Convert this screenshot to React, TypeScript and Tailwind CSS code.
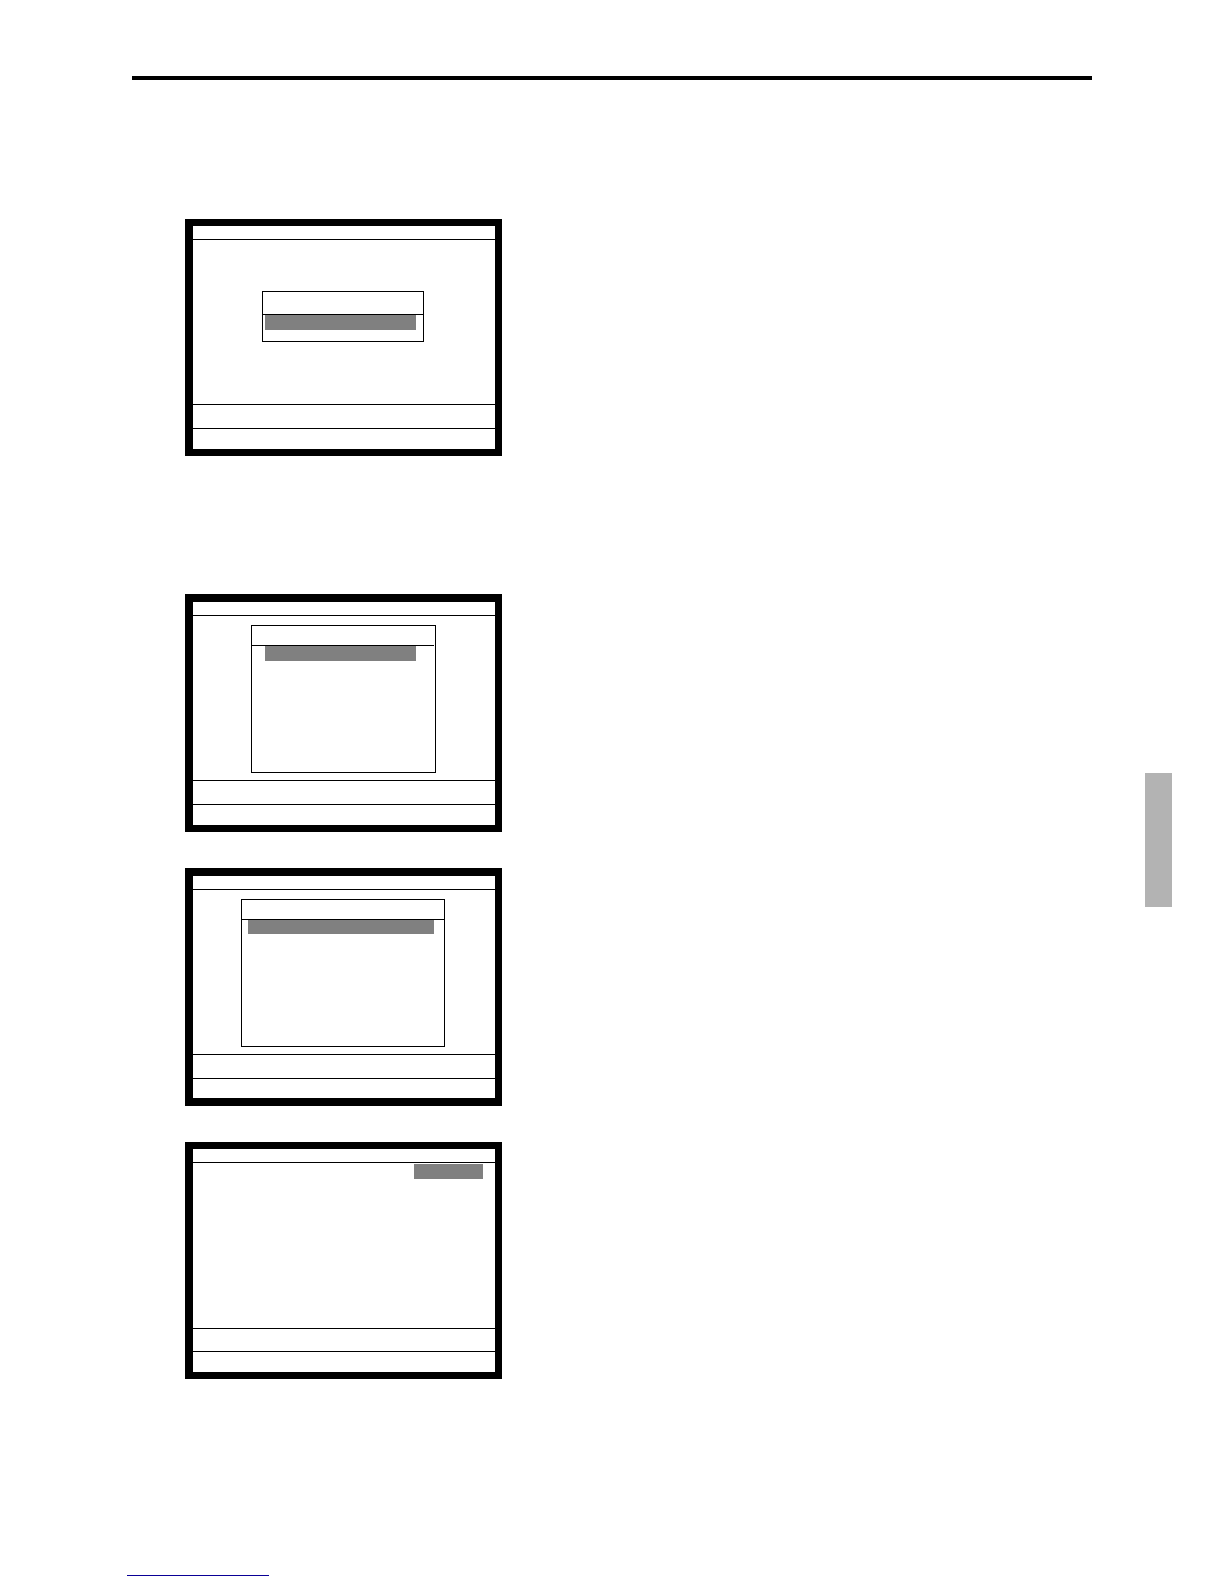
import type { ReactNode } from 'react';
import clsx from 'clsx';

interface ScreenProps {
    frame: string;
    body?: string;
    message?: string;
    status?: string;
    children: ReactNode;
}

// Terminal screen: title strip, work area, message line and status line
function Screen({
    frame,
    body = 'h-[164px]',
    message = 'h-6',
    status = 'h-[21px]',
    children,
}: ScreenProps) {
    return (
        <section className={clsx('w-[317px] max-w-full border-black border-l-8 border-r-[7px]', frame)}>
            <div className="h-3.5 border-b border-black" />
            <div className={clsx('flex flex-col', body)}>{children}</div>
            <div className={clsx('border-t border-black', message)} />
            <div className={clsx('border-t border-black', status)} />
        </section>
    );
}

interface MenuProps {
    box: string;
    title: string;
    selected: string;
}

// Menu window with the first entry highlighted
function Menu({ box, title, selected }: MenuProps) {
    return (
        <div className={clsx('border border-black', box)}>
            <div className={clsx('border-b border-black', title)} />
            <div className={clsx('bg-[#808080]', selected)} />
        </div>
    );
}

export default function App() {
    return (
        <div className="bg-white">
            <header className="px-[132px] pt-[76px]">
                <hr className="border-t-4 border-black" />
            </header>

            <div className="flex items-start justify-between pl-[185px] pr-[52px]">
                <main className="pt-[139px]">
                    <Screen frame="border-y-[7px]">
                        <Menu
                            box="mt-[51px] ml-[69px] w-[162px] h-[51px]"
                            title="h-[23px]"
                            selected="ml-0.5 mr-[7px] h-[15px]"
                        />
                    </Screen>

                    <div className="mt-[138px] flex flex-col gap-9">
                        <Screen frame="border-t-8 border-b-[7px]">
                            <Menu
                                box="mt-[9px] ml-[58px] w-[185px] h-[148px]"
                                title="mr-px h-5"
                                selected="ml-[13px] mr-[19px] h-[15px]"
                            />
                        </Screen>

                        <Screen frame="border-y-8" status="h-5">
                            <Menu
                                box="mt-[9px] ml-12 w-[204px] h-[148px]"
                                title="h-5"
                                selected="ml-1.5 mr-2.5 h-3.5"
                            />
                        </Screen>

                        <Screen frame="border-y-[7px]" body="h-[165px]" message="h-[23px]">
                            <div className="mt-px mr-3 h-[15px] w-[69px] self-end bg-[#808080]" />
                        </Screen>
                    </div>
                </main>

                {/* Chapter thumb tab */}
                <aside className="mt-[693px] h-[134px] w-[27px] bg-[#b3b3b3]" />
            </div>

            <footer className="px-[127px] pt-[196px] pb-2">
                <div className="w-[142px] border-t border-[#0a0096]" />
            </footer>
        </div>
    );
}
